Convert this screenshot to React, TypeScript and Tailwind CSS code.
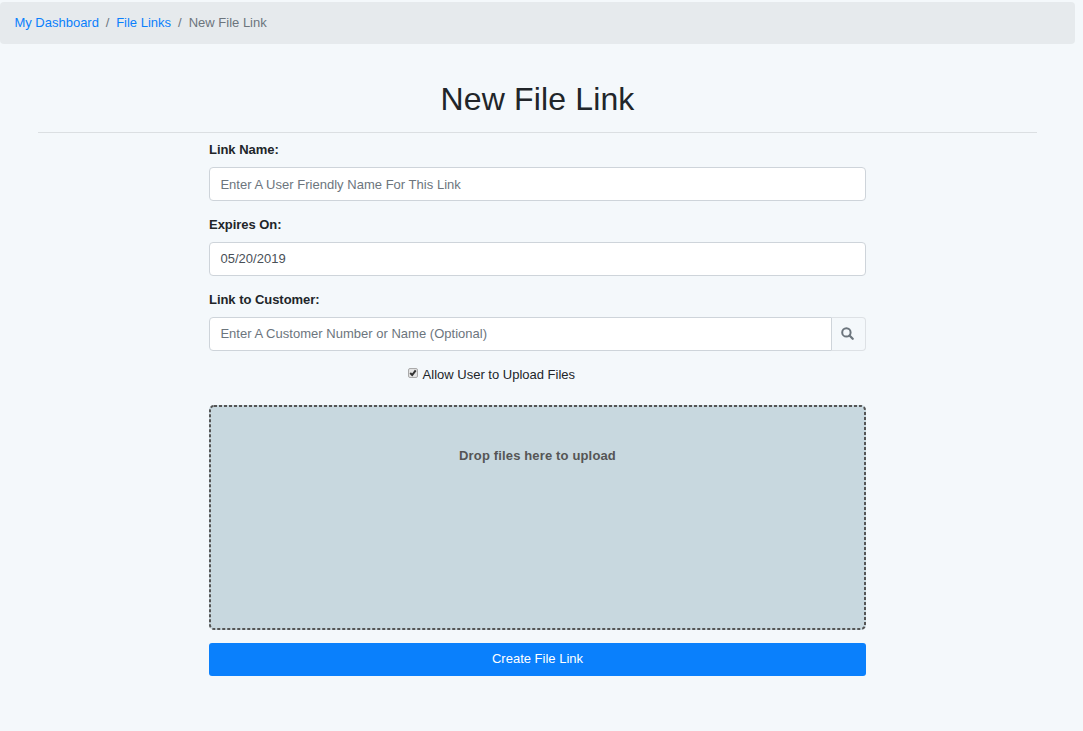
import React from "react";

function Field({ label, children }: { label: string; children: React.ReactNode }) {
  return (
    <div className="mb-[14px]">
      <label className="block h-[27px] text-[13px] leading-[19px] font-bold tracking-[-0.04px]">{label}</label>
      {children}
    </div>
  );
}

const inputClass =
  "block h-[34px] w-full rounded border border-[#ced4da] bg-white px-[10.4px] text-[13px] tracking-[0.02px] text-[#495057] outline-none placeholder:text-[#6c757d] placeholder:opacity-100";

export default function App() {
  return (
    <div className="h-[731px] overflow-hidden bg-[#f4f8fb] pt-[2px] font-['Liberation_Sans',Arial,sans-serif] text-[13px] leading-[19px] text-[#212529]">
      <nav className="flex h-[42px] w-[1075px] items-center rounded bg-[#e6eaed] px-[14.4px] pb-[2px] text-[#6c757d]">
        <a href="#" className="text-[#0a80fc]">My Dashboard</a>
        <span className="px-[6.8px]">/</span>
        <a href="#" className="text-[#0a80fc]">File Links</a>
        <span className="px-[7px]">/</span>
        <span>New File Link</span>
      </nav>
      <main className="w-[1075px] px-[38px] pt-[36px]">
        <h1 className="h-[52px] text-center text-[32px] leading-[38px] font-normal tracking-[0.15px]">New File Link</h1>
        <hr className="border-t border-[#dbdfe2]" />
        <form className="mx-auto w-[657px] pt-[7px]" onSubmit={(e) => e.preventDefault()}>
          <Field label="Link Name:">
            <input className={inputClass} placeholder="Enter A User Friendly Name For This Link" />
          </Field>
          <Field label="Expires On:">
            <input className={inputClass + " pb-[2px]"} defaultValue="05/20/2019" />
          </Field>
          <Field label="Link to Customer:">
            <div className="flex">
              <input className={inputClass + " rounded-r-none pb-[2px]"} placeholder="Enter A Customer Number or Name (Optional)" />
              <button type="button" aria-label="Search" className="flex h-[34px] w-[34px] shrink-0 items-center justify-center rounded-r border border-l-0 border-[#dde1e5] pr-[2px] pb-[1px] text-[#6c757d]">
                <svg width="13" height="13" viewBox="0 0 13 13" fill="none" stroke="currentColor">
                  <circle cx="5.4" cy="5.4" r="4.2" strokeWidth="2" />
                  <path d="M8.5 8.5 11.7 11.7" strokeWidth="2.3" strokeLinecap="round" />
                </svg>
              </button>
            </div>
          </Field>
          <label className="ml-[199px] flex h-[19px] items-center gap-[4.6px]">
            <span className="relative mb-[3px] h-[10px] w-[10px]">
              <input type="checkbox" defaultChecked className="peer block h-[10px] w-[10px] appearance-none rounded-[2px] border border-[#aaaaaa] bg-[#e3e3e3]" />
              <svg className="pointer-events-none absolute inset-0 hidden peer-checked:block" width="10" height="10" viewBox="0 0 11 11" fill="none" stroke="#333333" strokeWidth="2.2">
                <path d="M2.4 5.6 4.6 7.7 8.5 2.6" />
              </svg>
            </span>
            Allow User to Upload Files
          </label>
          <div className="relative mt-[21px] h-[225px] rounded-[5px] bg-[#c8d8df] pt-[41px] text-center font-bold tracking-[0.15px] text-[#555555]">
            <svg className="pointer-events-none absolute inset-0" width="657" height="225" fill="none">
              <rect x="1" y="1" width="655" height="223" rx="4" stroke="#555555" strokeWidth="2" strokeDasharray="3 2" />
            </svg>
            Drop files here to upload
          </div>
          <button type="submit" className="mt-[13px] block h-[33px] w-full rounded-[3px] bg-[#0a80fc] pb-[2px] text-center text-white">
            Create File Link
          </button>
        </form>
      </main>
    </div>
  );
}
